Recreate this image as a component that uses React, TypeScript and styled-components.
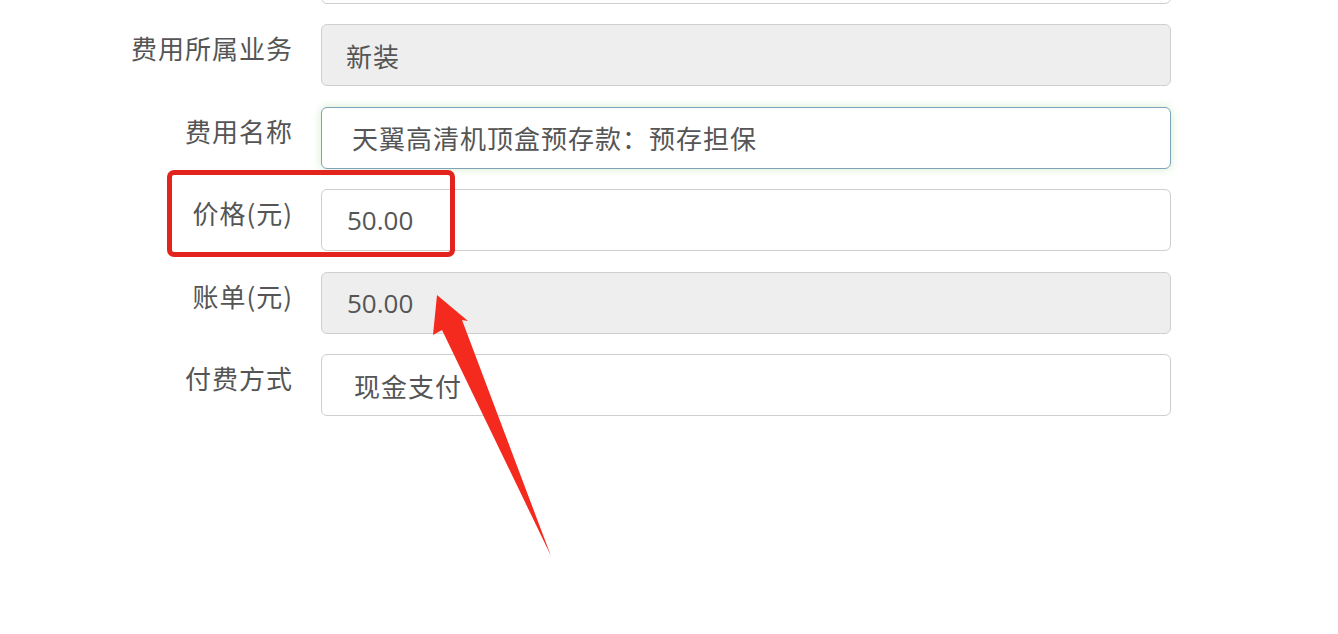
import React from "react";
import styled, { createGlobalStyle, css } from "styled-components";

const Global = createGlobalStyle`
  html, body { margin: 0; padding: 0; background: #fff; }
  body { font-family: "Noto Sans CJK SC", "Open Sans", sans-serif; overflow: hidden; }
`;

const Page = styled.div`
  position: relative;
  width: 1338px;
  height: 634px;
  overflow: hidden;
  background: #fff;
`;

const Form = styled.div`
  display: flex;
  flex-direction: column;
  gap: 20.6px;
  margin-top: -58.5px;
`;

const Row = styled.div`
  display: grid;
  grid-template-columns: 293px 850px;
  column-gap: 28px;
  align-items: start;
  height: 62px;
`;

const Label = styled.div`
  text-align: right;
  font-size: 26px;
  line-height: 30px;
  padding-top: 9px;
  color: #555;
  letter-spacing: 1px;
`;

const Field = styled.div<{ $disabled?: boolean; $focus?: boolean; $pad: number }>`
  box-sizing: border-box;
  height: 62px;
  display: flex;
  align-items: center;
  padding-left: ${(p) => p.$pad}px;
  border: 1.5px solid #cfcfcf;
  border-radius: 6px;
  background: ${(p) => (p.$disabled ? "#eeeeee" : "#fff")};
  font-size: 26px;
  letter-spacing: 1px;
  color: #555;
  white-space: nowrap;
  ${(p) =>
    p.$focus &&
    css`
      border-color: #7fa3b9;
      box-shadow: 0 0 8px rgba(190, 230, 180, 0.7);
    `}
`;

const Num = styled.span`
  font-family: "Open Sans", "Noto Sans CJK SC", sans-serif;
  font-size: 26px;
  letter-spacing: 0;
  color: #555;
`;

const Highlight = styled.div`
  position: absolute;
  left: 167px;
  top: 170px;
  width: 288px;
  height: 87px;
  box-sizing: border-box;
  border: 5px solid #e3241c;
  border-radius: 7px;
  pointer-events: none;
`;

const ArrowSvg = styled.svg`
  position: absolute;
  left: 0;
  top: 0;
  pointer-events: none;
`;

export default function App() {
  return (
    <Page>
      <Global />
      <Form>
        <Row>
          <Label></Label>
          <Field $pad={24}></Field>
        </Row>
        <Row>
          <Label>费用所属业务</Label>
          <Field $disabled $pad={24}>新装</Field>
        </Row>
        <Row>
          <Label>费用名称</Label>
          <Field $focus $pad={30}>天翼高清机顶盒预存款：预存担保</Field>
        </Row>
        <Row>
          <Label>价格(元)</Label>
          <Field $pad={25}><Num>50.00</Num></Field>
        </Row>
        <Row>
          <Label>账单(元)</Label>
          <Field $disabled $pad={25}><Num>50.00</Num></Field>
        </Row>
        <Row>
          <Label>付费方式</Label>
          <Field $pad={32}>现金支付</Field>
        </Row>
      </Form>
      <Highlight />
      <ArrowSvg width="1338" height="634" viewBox="0 0 1338 634">
        <polygon
          points="437,295 468,321 462,320 551,556 442,330 433,335"
          fill="#f52a1f"
        />
      </ArrowSvg>
    </Page>
  );
}
